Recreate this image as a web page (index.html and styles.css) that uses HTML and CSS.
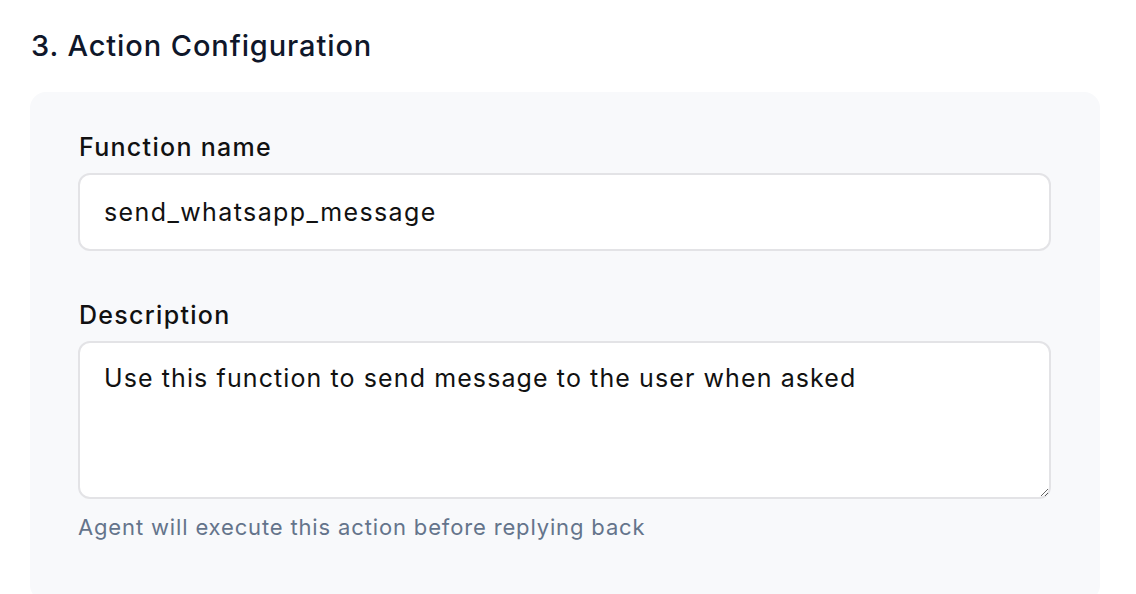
FILE: index.html
```html
<!DOCTYPE html>
<html lang="en">
<head>
<meta charset="utf-8">
<title>Action Configuration</title>
<link rel="stylesheet" href="styles.css">
</head>
<body>
<main class="page">
  <h1 class="section-title">3. Action Configuration</h1>
  <section class="card">
    <div class="field">
      <label class="field-label" for="fn-name">Function name</label>
      <input class="text-input" id="fn-name" type="text" value="send_whatsapp_message">
    </div>
    <div class="field">
      <label class="field-label" for="fn-desc">Description</label>
      <textarea class="text-area" id="fn-desc">Use this function to send message to the user when asked</textarea>
      <p class="field-help">Agent will execute this action before replying back</p>
    </div>
  </section>
</main>
</body>
</html>
```

FILE: styles.css
```css
* { box-sizing: border-box; }
html, body { margin: 0; padding: 0; background: #ffffff; }
body {
  font-family: Inter, "Noto Sans", "Liberation Sans", sans-serif;
  color: #111111;
  overflow: hidden;
}
.page {
  padding: 28px 36px 0 30px;
}
.section-title {
  margin: 0 0 29px 0;
  font-size: 29px;
  line-height: 35px;
  font-weight: 500;
  letter-spacing: 0.9px;
  color: #0f172a;
  padding-left: 1px;
}
.card {
  width: 1070px;
  background: #f8f9fb;
  border-radius: 16px;
  padding: 40px 49px 60px 48px;
  display: flex;
  flex-direction: column;
  gap: 49px;
}
.field {
  display: flex;
  flex-direction: column;
}
.field-label {
  font-size: 25px;
  line-height: 30px;
  font-weight: 500;
  letter-spacing: 1.3px;
  color: #111111;
  margin-bottom: 11px;
  padding-left: 1px;
}
.text-input,
.text-area {
  width: 100%;
  font-family: inherit;
  font-size: 25px;
  color: #111111;
  background: #ffffff;
  border: 2px solid #e3e3e6;
  border-radius: 12px;
  outline: none;
}
.text-input {
  height: 78px;
  padding: 0 24px;
  letter-spacing: 1.4px;
}
.text-area {
  height: 158px;
  padding: 17px 24px;
  line-height: 36px;
  letter-spacing: 1.1px;
  resize: vertical;
}
.field-help {
  margin: 14px 0 0 0;
  font-size: 22px;
  line-height: 28px;
  letter-spacing: 0.85px;
  color: #64748b;
}
```
